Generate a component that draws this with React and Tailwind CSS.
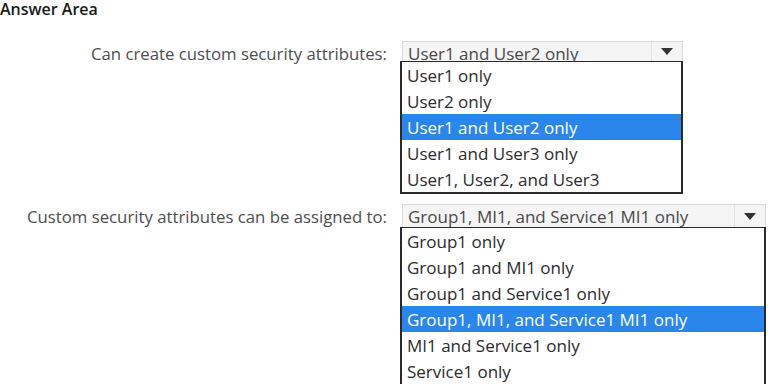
import React from "react";

const font = { fontFamily: '"Open Sans", "Noto Sans", "Liberation Sans", sans-serif' };

function Arrow() {
  return (
    <svg width="12" height="7" viewBox="0 0 12 7">
      <path d="M0 0 L12 0 L6 7 Z" fill="#333" />
    </svg>
  );
}

function Dropdown({ width, value, options, selected, selHeight }) {
  return (
    <div className="flex flex-col" style={{ width }}>
      <div
        className="flex items-stretch border border-[#d9d9d9] border-b-0 bg-[#f5f5f5] ml-[2px] overflow-hidden"
        style={{ height: selHeight }}
      >
        <div className="flex-1 pl-[5px] pt-[1px] text-[17px] leading-[22px] text-[#4a4a4a] overflow-hidden whitespace-nowrap">
          {value}
        </div>
        <div className="w-[31px] border-l border-[#e2e2e2] flex items-center justify-center">
          <Arrow />
        </div>
      </div>
      <div className="border-2 border-t border-[#2a2a2a] bg-white">
        {options.map((o, i) => (
          <div
            key={i}
            className={
              "h-[26px] pl-[5px] pt-[3px] text-[17px] leading-[22px] whitespace-nowrap " +
              (i === selected ? "bg-[#2a86ea] text-white" : "text-[#2b2b2b]")
            }
          >
            {o}
          </div>
        ))}
      </div>
    </div>
  );
}

export default function App() {
  return (
    <div className="w-[768px] h-[384px] overflow-hidden bg-white" style={font}>
      <div className="h-[18px] text-[16px] leading-[18px] font-semibold text-[#1a1a1a]">
        Answer Area
      </div>
      <div className="flex mt-[23px]">
        <div className="w-[388px] text-right text-[16.75px] leading-[25px] text-[#4d4d4d] pr-[1px]">
          Can create custom security attributes:
        </div>
        <div className="ml-[12px]">
          <Dropdown
            width={283}
            selHeight={20}
            value="User1 and User2 only"
            selected={2}
            options={[
              "User1 only",
              "User2 only",
              "User1 and User2 only",
              "User1 and User3 only",
              "User1, User2, and User3",
            ]}
          />
        </div>
      </div>
      <div className="flex mt-[10px]">
        <div className="w-[388px] text-right text-[16.75px] leading-[26px] text-[#4d4d4d] pr-[1px]">
          Custom security attributes can be assigned to:
        </div>
        <div className="ml-[12px]">
          <Dropdown
            width={366}
            selHeight={23}
            value="Group1, MI1, and Service1 MI1 only"
            selected={3}
            options={[
              "Group1 only",
              "Group1 and MI1 only",
              "Group1 and Service1 only",
              "Group1, MI1, and Service1 MI1 only",
              "MI1 and Service1 only",
              "Service1 only",
            ]}
          />
        </div>
      </div>
    </div>
  );
}
